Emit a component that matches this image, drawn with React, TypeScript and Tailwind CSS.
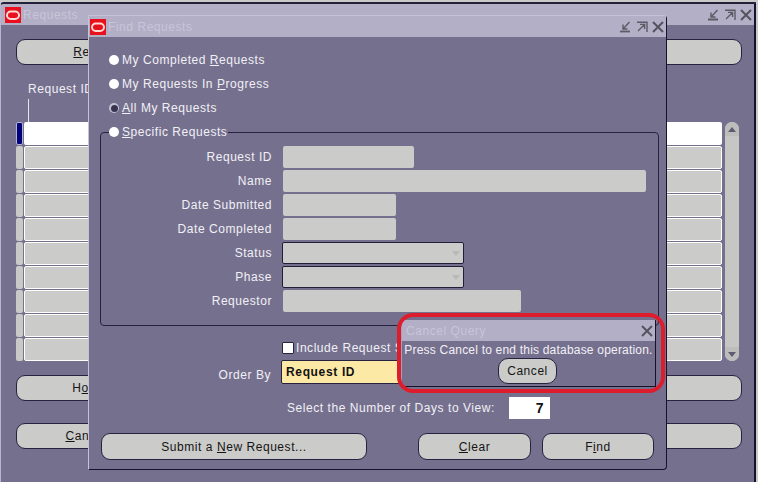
import React from "react";

const font = { fontFamily: '"Liberation Sans", Arial, sans-serif' };

const OracleLogo = () => (
  <svg width="16" height="16" viewBox="0 0 16 16" className="shrink-0">
    <rect width="16" height="16" fill="#e8101c" />
    <rect x="2" y="4.5" width="12" height="7.5" rx="3.7" fill="none" stroke="#ffd9d4" strokeWidth="2" />
  </svg>
);

const MinIcon = () => (
  <svg width="12" height="12" viewBox="0 0 12 12" fill="none" stroke="#5b5b66" strokeWidth="1.4">
    <path d="M9.5 1 L3.5 7.5 M3 3.5 V8 H7.5" />
    <path d="M0 10.5 H10" strokeWidth="1.8" />
  </svg>
);

const MaxIcon = () => (
  <svg width="12" height="12" viewBox="0 0 12 12" fill="none" stroke="#5b5b66" strokeWidth="1.4">
    <path d="M1 1.2 H11 V11 M2 10 L8.5 3.5 M4 3.4 H8.6 V8" />
  </svg>
);

const CloseIcon = () => (
  <svg width="12" height="12" viewBox="0 0 12 12" fill="none" stroke="#54545e" strokeWidth="2">
    <path d="M1 1 L11 11 M11 1 L1 11" />
  </svg>
);

const TitleBar = ({ title, controls = true, inset }: { title: string; controls?: boolean; inset?: boolean }) => (
  <div
    className={`flex h-[21px] items-center bg-[#b3afc7] pr-[2px] text-[12px] tracking-[0.55px] text-[#c8c5d8] ${
      inset ? "pl-[4px]" : "pl-[1px]"
    }`}
  >
    {controls && <OracleLogo />}
    <span className={controls ? "ml-[2px]" : "ml-[3px]"}>{title}</span>
    <div className="ml-auto flex items-center gap-[4px]">
      {controls && <MinIcon />}
      {controls && <MaxIcon />}
      <CloseIcon />
    </div>
  </div>
);

const Btn = ({ className, children }: { className: string; children: React.ReactNode }) => (
  <div
    className={`flex items-center justify-center rounded-[9px] border border-[#27223f] bg-[#cbcbc9] text-[12px] tracking-[0.55px] text-[#151515] ${className}`}
  >
    <span>{children}</span>
  </div>
);

const Radio = ({ selected, children }: { selected?: boolean; children: React.ReactNode }) => (
  <div className="flex h-[24px] items-center text-[12px] tracking-[0.55px] text-[#f1f1f5]">
    <div
      className={`flex h-[10px] w-[10px] items-center justify-center rounded-full ${
        selected ? "bg-[#c4c2d2]" : "bg-white"
      }`}
    >
      {selected && <div className="h-[7px] w-[7px] rounded-full bg-[#37324f]" />}
    </div>
    <span className="ml-[3px]">{children}</span>
  </div>
);

const Field = ({ label, width, select }: { label: string; width: string; select?: boolean }) => (
  <div className="flex h-[24px] items-center text-[12px] tracking-[0.55px] text-[#f1f1f5]">
    <div className="w-[182px] pr-[11px] text-right">{label}</div>
    <div
      className={`flex h-[22px] items-center justify-end rounded-[2px] bg-[#cbcbc9] pr-[3px] ${width} ${
        select ? "-ml-px border border-[#221d3a]" : ""
      }`}
    >
      {select && (
        <svg width="8" height="5" viewBox="0 0 8 5">
          <path d="M0 0 H8 L4 5 Z" fill="#b9b9b9" />
        </svg>
      )}
    </div>
  </div>
);

const GridRow = ({ first }: { first?: boolean }) => (
  <div className="flex h-[24px] pb-[1px]">
    <div
      className={`w-[7px] rounded-[2px] ${first ? "border border-[#b5b1d0] bg-[#000078]" : "bg-[#c9c9c7]"}`}
    />
    <div
      className={`ml-[1px] h-[23px] w-[698px] rounded-[2px] ${
        first ? "bg-white" : "border border-white bg-[#cbcbc9]"
      }`}
    />
  </div>
);

const Scrollbar = () => (
  <div className="ml-[3px] flex h-[239px] w-[14px] flex-col justify-between rounded-[7px] bg-[#c6c6c4]">
    <div className="flex h-[14px] items-center justify-center rounded-t-[7px] bg-[#bdbdbb]">
      <svg width="8" height="5" viewBox="0 0 8 5">
        <path d="M4 0 L8 5 H0 Z" fill="#5e5a70" />
      </svg>
    </div>
    <div className="flex h-[14px] items-center justify-center rounded-b-[7px] bg-[#bdbdbb]">
      <svg width="8" height="5" viewBox="0 0 8 5">
        <path d="M0 0 H8 L4 5 Z" fill="#5e5a70" />
      </svg>
    </div>
  </div>
);

const RequestsWindow = () => (
  <div className="absolute left-0 top-[2px] flex h-[482px] w-[756px] flex-col overflow-hidden rounded-tl-[4px] border-l border-r-2 border-t-2 border-l-[#b9b6cb] border-r-[#15122a] border-t-[#23203a] bg-[#76708f]">
    <TitleBar title="Requests" inset />
    <div className="flex flex-col pl-[15px] pt-[14px]">
      <div className="flex h-[26px] w-[726px] gap-[8px]">
        <Btn className="w-[192px]"><u>R</u>efresh Data</Btn>
        <Btn className="flex-1">Find Requests</Btn>
        <Btn className="w-[320px]">Submit a New Request...</Btn>
      </div>
      <div className="flex h-[57px] flex-col pl-[12px] pt-[17px] text-[12px] tracking-[0.55px] text-[#f1f1f5]">
        <span className="h-[15px] leading-[15px]">Request ID</span>
        <div className="mt-[2px] h-[24px] w-px bg-[#e6e6ee]" />
      </div>
      <div className="flex">
        <div className="flex flex-col">
          <GridRow first />
          {[0, 1, 2, 3, 4, 5, 6, 7, 8].map((i) => (
            <GridRow key={i} />
          ))}
        </div>
        <Scrollbar />
      </div>
      <div className="mt-[13px] flex h-[26px] w-[726px] gap-[8px]">
        <Btn className="w-[192px]">H<u>o</u>ld Request</Btn>
        <Btn className="flex-1">View Details...</Btn>
        <Btn className="w-[320px]">Diagnostics</Btn>
      </div>
      <div className="mt-[22px] flex h-[26px] w-[726px] gap-[8px]">
        <Btn className="w-[192px]"><u>C</u>ancel Request</Btn>
        <Btn className="flex-1">View Output</Btn>
        <Btn className="w-[320px]">View Log...</Btn>
      </div>
    </div>
  </div>
);

const FindWindow = () => (
  <div className="absolute left-[88px] top-[15px] flex h-[455px] w-[579px] flex-col rounded-br-[4px] rounded-tr-[4px] border-b border-l border-r border-t border-b-[#15122a] border-l-[#c6c3d6] border-r-[#15122a] border-t-[#c6c3d6] bg-[#76708f]">
    <TitleBar title="Find Requests" />
    <div className="flex flex-col pl-[11px] pt-[11px]">
      <div className="ml-[9px] flex flex-col">
        <Radio>My Completed <u>R</u>equests</Radio>
        <Radio>My Requests In <u>P</u>rogress</Radio>
        <Radio selected><u>A</u>ll My Requests</Radio>
      </div>
      <div className="relative mt-[12px] h-[194px] w-[559px] rounded-[4px] border border-[#27223f] pt-[12px]">
        <div className="absolute -top-[13px] left-[8px] bg-[#76708f] pr-[1px]">
          <Radio><u>S</u>pecific Requests</Radio>
        </div>
        <Field label="Request ID" width="w-[131px]" />
        <Field label="Name" width="w-[363px]" />
        <Field label="Date Submitted" width="w-[113px]" />
        <Field label="Date Completed" width="w-[113px]" />
        <Field label="Status" width="w-[182px]" select />
        <Field label="Phase" width="w-[182px]" select />
        <Field label="Requestor" width="w-[238px]" />
      </div>
      <div className="ml-[182px] mt-[13px] flex h-[18px] items-center text-[12px] tracking-[0.55px] text-[#f1f1f5]">
        <div className="h-[12px] w-[12px] rounded-[1px] border border-[#27223f] bg-white" />
        <span className="ml-[2px]">Include Request Set Stages</span>
      </div>
      <div className="mt-[3px] flex h-[24px] text-[12px] tracking-[0.55px] text-[#f1f1f5]">
        <div className="w-[182px] pr-[11px] pt-[6px] text-right">Order By</div>
        <div className="-ml-[1px] flex h-[24px] w-[184px] items-center rounded-[2px] border border-[#27223f] bg-[#fde9a6] pl-[4px] font-bold tracking-[0.65px] text-[#111]">
          Request ID
        </div>
      </div>
      <div className="mt-[13px] flex h-[22px] items-center text-[12px] tracking-[0.55px] text-[#f1f1f5]">
        <span className="ml-[187px] w-[222px]">Select the Number of Days to View:</span>
        <div className="flex h-[22px] w-[41px] items-center justify-end bg-white pr-[6px] text-[14px] font-bold text-[#111]">
          7
        </div>
      </div>
      <div className="mt-[14px] ml-px flex h-[27px]">
        <Btn className="w-[266px]">Submit a <u>N</u>ew Request...</Btn>
        <Btn className="ml-[51px] w-[113px]"><u>C</u>lear</Btn>
        <Btn className="ml-[11px] w-[112px]">F<u>i</u>nd</Btn>
      </div>
    </div>
  </div>
);

const CancelDialog = () => (
  <>
    <div className="absolute left-[401px] top-[320px] flex h-[67px] w-[255px] flex-col border-b border-l border-r border-b-[#15122a] border-l-[#a5a1bb] border-r-[#15122a] bg-[#76708f]">
      <TitleBar title="Cancel Query" controls={false} />
      <div className="flex flex-col items-center">
        <div className="mt-[1px] h-[16px] whitespace-nowrap text-[12px] leading-[16px] tracking-[0.2px] text-[#f1f1f5]">
          Press Cancel to end this database operation.
        </div>
        <Btn className="-ml-[2px] h-[26px] w-[59px] rounded-[10px]">Cancel</Btn>
      </div>
    </div>
    <div className="absolute left-[397px] top-[313px] h-[80px] w-[268px] rounded-[16px] border-[4px] border-[#dd1c2c]" />
  </>
);

export default function App() {
  return (
    <div className="relative h-[482px] w-[758px] overflow-hidden bg-[#c9c9c9]" style={font}>
      <RequestsWindow />
      <FindWindow />
      <CancelDialog />
    </div>
  );
}
